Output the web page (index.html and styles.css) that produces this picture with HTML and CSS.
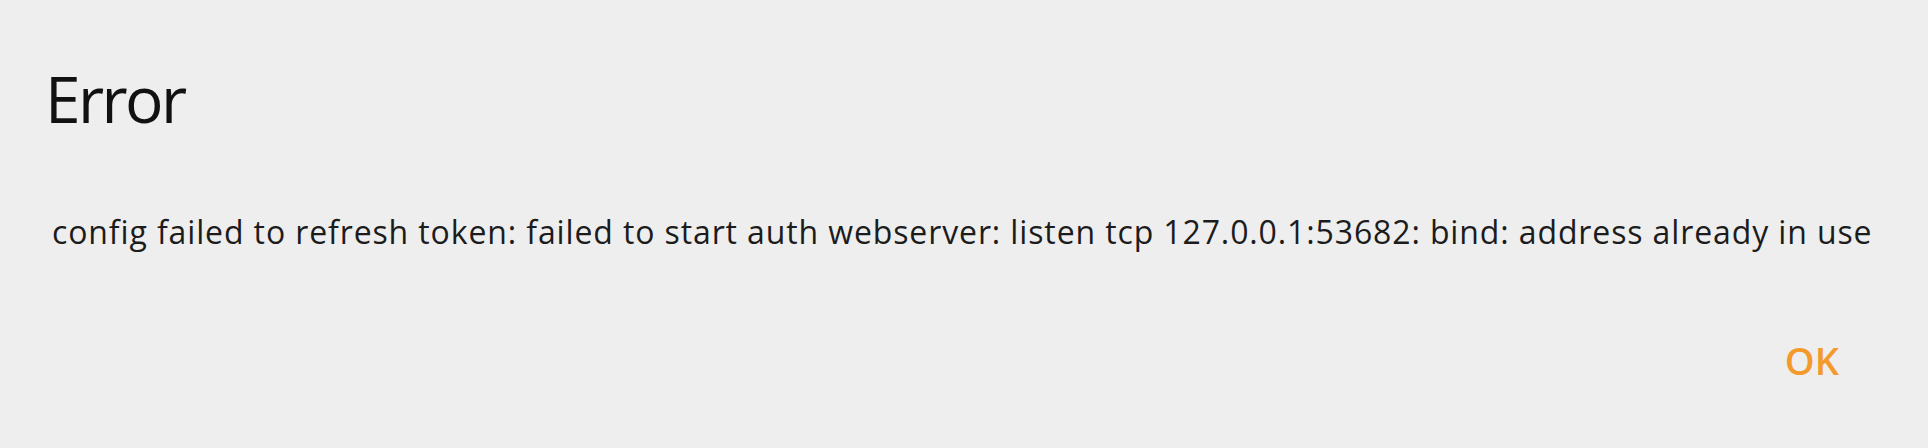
FILE: index.html
```html
<!DOCTYPE html>
<html>
<head>
<meta charset="utf-8">
<link rel="stylesheet" href="styles.css">
</head>
<body>
<div class="dialog">
  <h1 class="title">Error</h1>
  <p class="message">config failed to refresh token: failed to start auth webserver: listen tcp 127.0.0.1:53682: bind: address already in use</p>
  <div class="actions"><button class="ok">OK</button></div>
</div>
</body>
</html>
```
FILE: styles.css
```css
html, body {
  margin: 0;
  padding: 0;
  background: #eeeeee;
}
body {
  width: 1928px;
  height: 448px;
  overflow: hidden;
  font-family: "Open Sans", "Noto Sans", sans-serif;
}
.dialog {
  display: flex;
  flex-direction: column;
  padding: 0 89px 0 45px;
}
.title {
  margin: 55px 0 0 0;
  font-size: 64px;
  font-weight: 400;
  line-height: 88px;
  letter-spacing: -2.6px;
  color: #111111;
}
.message {
  margin: 69px 0 0 7px;
  font-size: 32px;
  line-height: 40px;
  letter-spacing: 0.88px;
  color: #1c1c1c;
  white-space: nowrap;
}
.actions {
  display: flex;
  justify-content: flex-end;
  margin-top: 86px;
}
.ok {
  background: none;
  border: none;
  padding: 0;
  font-family: inherit;
  font-size: 38px;
  font-weight: 600;
  line-height: 44px;
  color: #f39a2b;
}
```
